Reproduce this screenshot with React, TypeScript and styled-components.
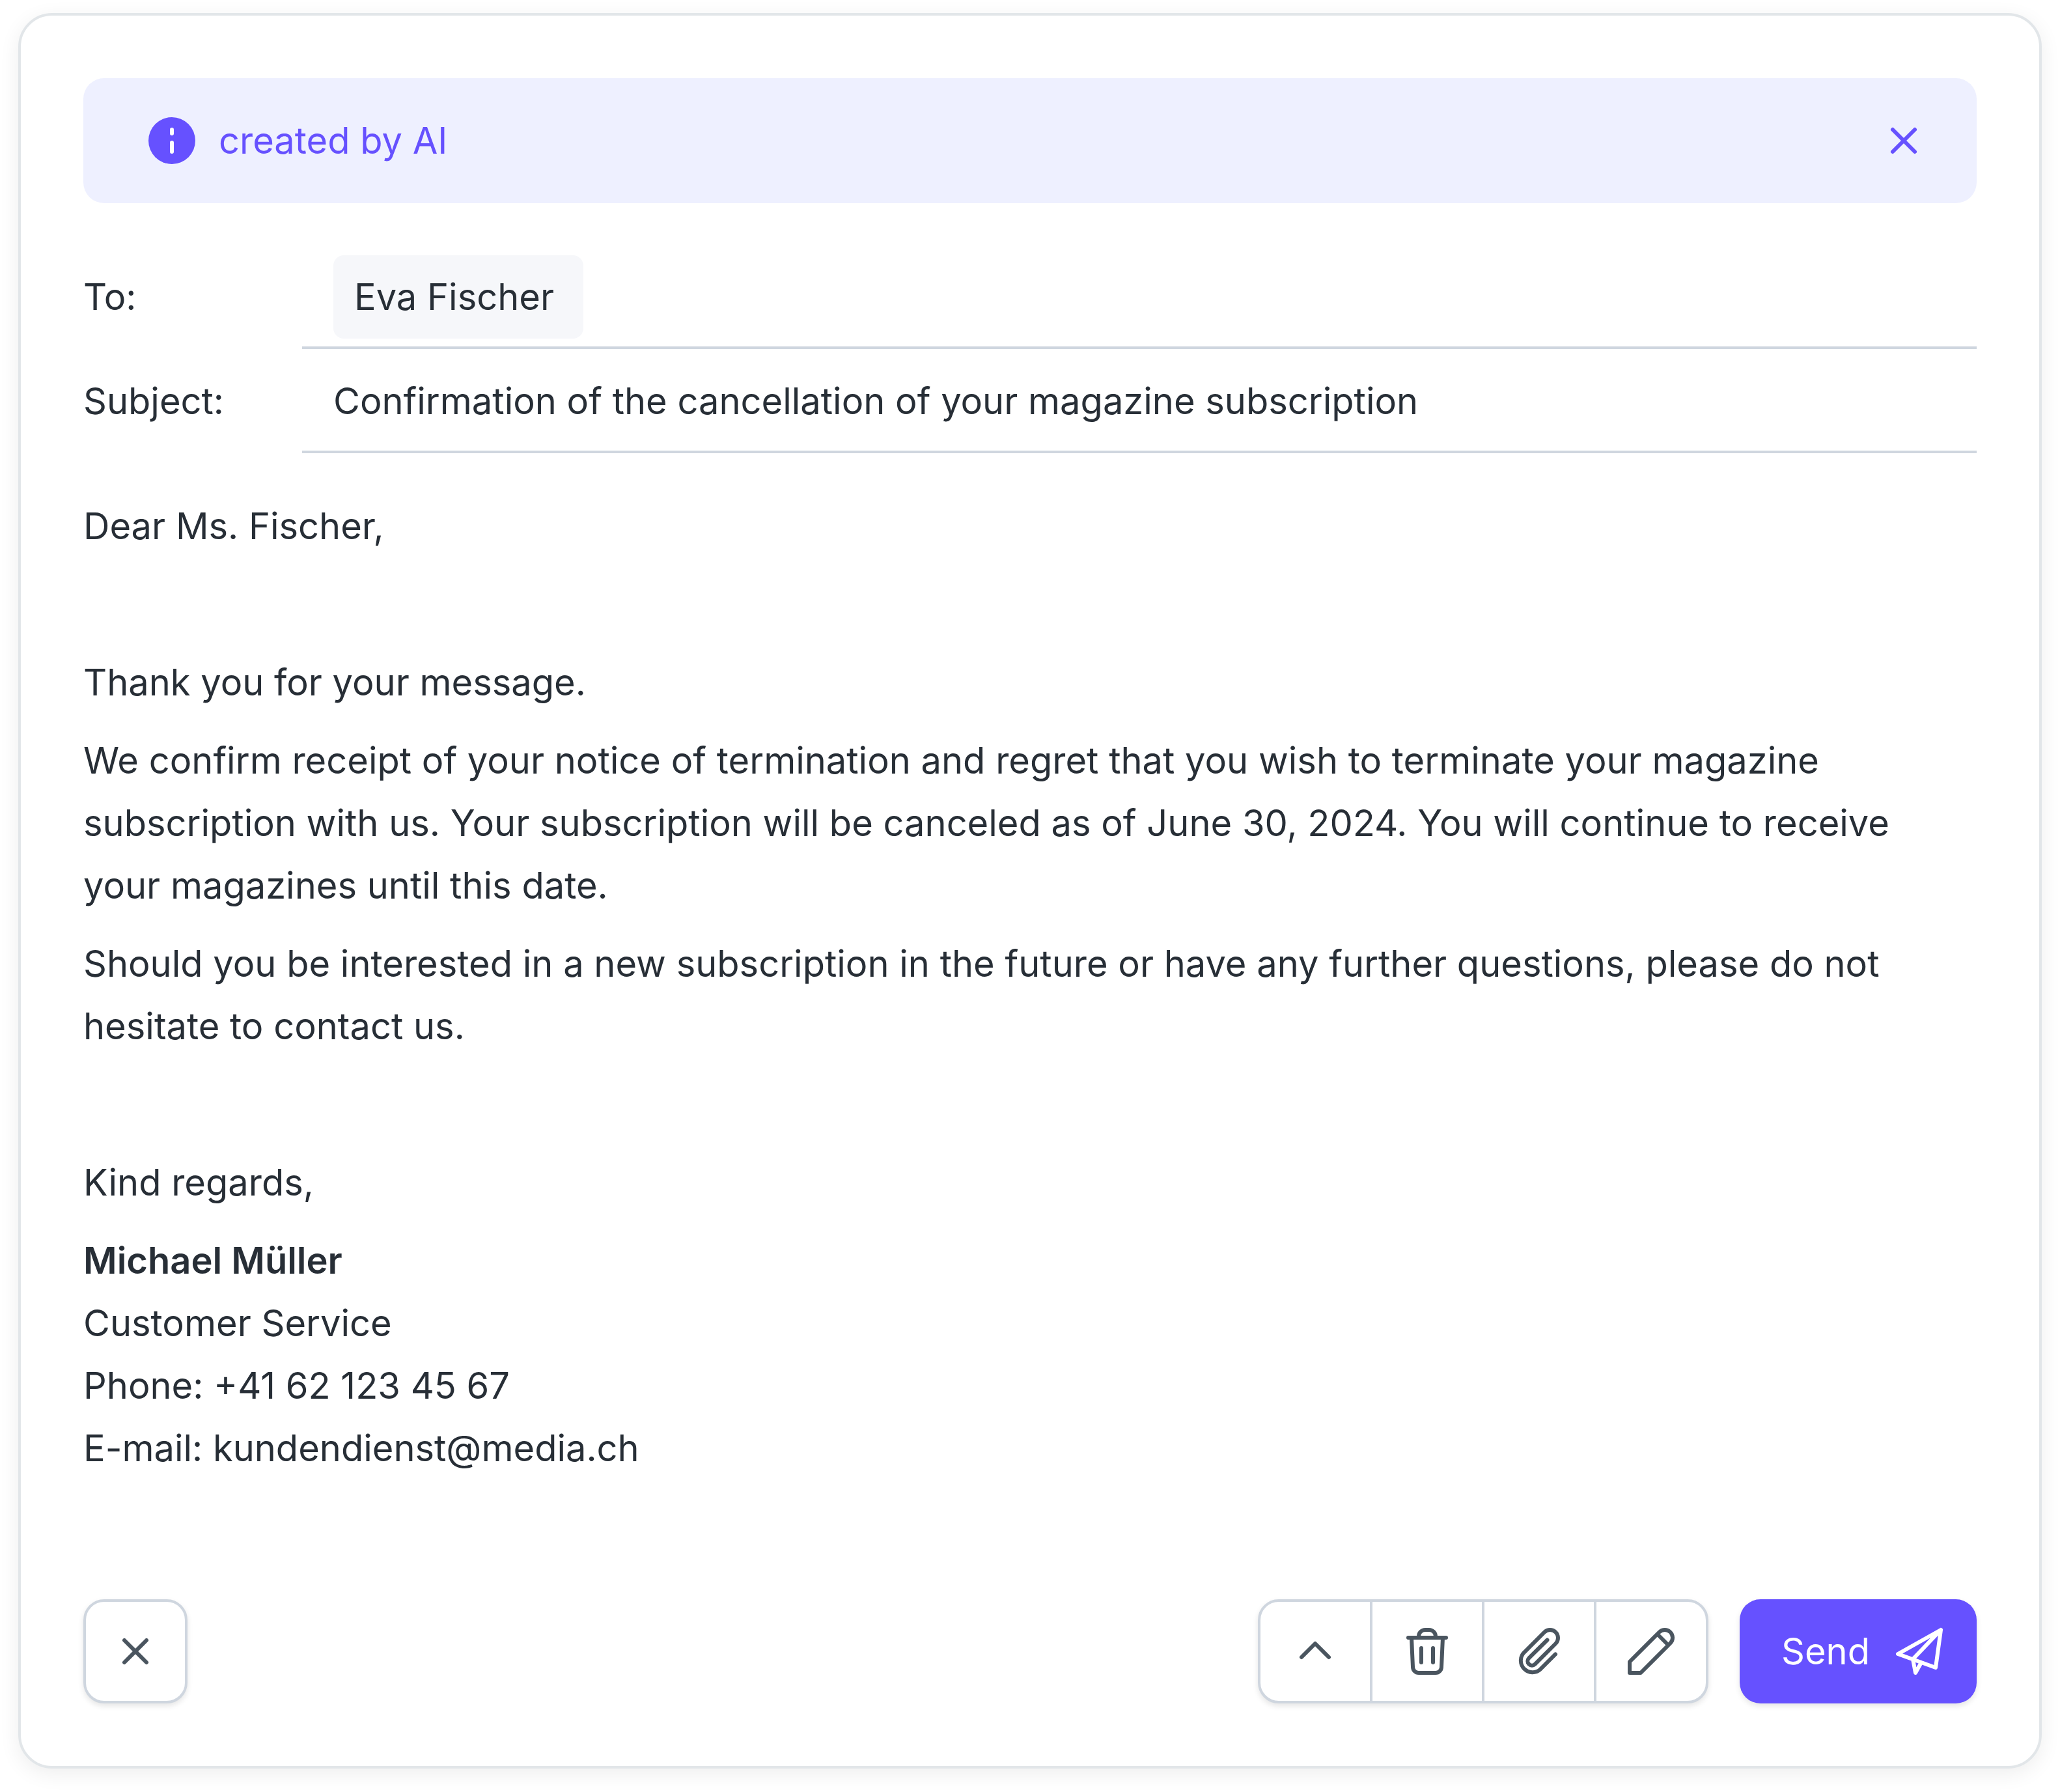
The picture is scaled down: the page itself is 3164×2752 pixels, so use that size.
import React from "react";
import styled, { createGlobalStyle } from "styled-components";

const color = {
  primary: "#6651ff",
  primarySoft: "#eef0ff",
  text: "#272e36",
  icon: "#4a555f",
  line: "#cfd6df",
  cardLine: "#e2e6e9",
  chip: "#f6f7fa",
};

const GlobalStyle = createGlobalStyle`
  *, *::before, *::after { box-sizing: border-box; }
  body {
    margin: 0;
    background: #ffffff;
    color: ${color.text};
    font-family: Inter, "Liberation Sans", sans-serif;
    font-size: 56px;
    font-optical-sizing: none;
    font-variation-settings: "opsz" 14;
    line-height: 96px;
  }
  button, input { font: inherit; font-variation-settings: inherit; color: inherit; }
`;

const Page = styled.main`
  padding: 20px 28px 36px;
`;

const Card = styled.form`
  display: flex;
  flex-direction: column;
  padding: 96px;
  background: #ffffff;
  border: 4px solid ${color.cardLine};
  border-radius: 52px;
  box-shadow: 0 8px 32px rgba(0, 0, 0, 0.07);
`;

const Banner = styled.div`
  display: flex;
  align-items: center;
  gap: 32px;
  padding: 48px 72px 48px 96px;
  background: ${color.primarySoft};
  border-radius: 32px;
  color: ${color.primary};
`;

const BannerText = styled.span`
  flex: 1;
`;

const PlainButton = styled.button`
  display: flex;
  padding: 0;
  border: 0;
  background: none;
  cursor: pointer;
`;

const Fields = styled.div`
  display: flex;
  flex-direction: column;
  margin: 64px 0;
`;

const Field = styled.div`
  display: grid;
  grid-template-columns: 336px 1fr;
  align-items: center;
`;

const FieldBox = styled.div`
  display: flex;
  align-items: center;
  height: 160px;
  padding: 4px 48px 0;
  border-bottom: 4px solid ${color.line};
`;

const Chip = styled.span`
  min-width: 384px;
  padding: 16px 32px;
  border-radius: 16px;
  background: ${color.chip};
`;

const SubjectInput = styled.input`
  width: 100%;
  height: 96px;
  padding: 0;
  border: 0;
  outline: 0;
  background: transparent;
`;

const Message = styled.article`
  display: flex;
  flex-direction: column;
  gap: 24px;
`;

const Paragraph = styled.p`
  margin: 0;
  min-height: 96px;
`;

const Signer = styled.strong`
  font-weight: 600;
`;

const Footer = styled.footer`
  display: flex;
  align-items: center;
  gap: 48px;
  margin-top: 184px;
`;

const shadow = "0 4px 8px rgba(0, 0, 0, 0.1)";

const CloseButton = styled.button`
  display: flex;
  align-items: center;
  justify-content: center;
  width: 160px;
  height: 160px;
  margin-right: auto;
  padding: 0;
  border: 4px solid ${color.line};
  border-radius: 32px;
  background: #ffffff;
  box-shadow: ${shadow};
  color: ${color.icon};
  cursor: pointer;
`;

const ToolGroup = styled.div`
  display: flex;
  height: 160px;
  border: 4px solid ${color.line};
  border-radius: 32px;
  background: #ffffff;
  box-shadow: ${shadow};
`;

const ToolButton = styled.button`
  display: flex;
  align-items: center;
  justify-content: center;
  box-sizing: content-box;
  width: 168px;
  padding: 0;
  border: 0;
  background: none;
  color: ${color.icon};
  cursor: pointer;

  & + & {
    border-left: 4px solid ${color.line};
  }
`;

const SendButton = styled.button`
  display: flex;
  align-items: center;
  justify-content: space-between;
  gap: 32px;
  min-width: 364px;
  height: 160px;
  padding: 0 48px 0 64px;
  border: 0;
  border-radius: 32px;
  background: ${color.primary};
  box-shadow: ${shadow};
  color: #ffffff;
  cursor: pointer;
`;

const Icon = styled.svg.attrs({
  viewBox: "0 0 80 80",
  fill: "none",
  stroke: "currentColor",
  strokeWidth: 6,
  strokeLinecap: "round",
  strokeLinejoin: "round",
  "aria-hidden": true,
})`
  display: block;
  flex: none;
  width: 80px;
  height: 80px;
`;

const CrossIcon = () => (
  <Icon>
    <path d="M23 23L57 57M57 23L23 57" />
  </Icon>
);

const tools = [
  { label: "Expand", path: "M19 49L40 28L61 49" },
  {
    label: "Delete",
    path: "M11 19H69M27 19V17A10 10 0 0 1 37 7H43A10 10 0 0 1 53 17V19M16 19L18 64A9 9 0 0 0 27 73H53A9 9 0 0 0 62 64L64 19M31 35V57M49 35V57",
  },
  {
    label: "Attach file",
    path: "M65 44.4L41.7 67.7A18 18 0 0 1 16.3 42.3L48 10.6A12.3 12.3 0 0 1 65.4 28L33.7 59.7A6.6 6.6 0 0 1 24.3 50.3L52.5 22.5",
  },
  {
    label: "Edit",
    path: "M7 56L52.5 10.5A12 12 0 0 1 69.5 27.5L24 73H7ZM49.5 13.5L66.5 30.5",
  },
];

export default function App() {
  return (
    <>
      <GlobalStyle />
      <Page>
        <Card onSubmit={(event) => event.preventDefault()}>
          <Banner role="status">
            <Icon>
              <circle cx="40" cy="40" r="36" fill="currentColor" stroke="none" />
              <path d="M40 23V29M40 43V57" stroke="#ffffff" />
            </Icon>
            <BannerText>created by AI</BannerText>
            <PlainButton type="button" aria-label="Dismiss">
              <CrossIcon />
            </PlainButton>
          </Banner>

          <Fields>
            <Field>
              <span id="to-label">To:</span>
              <FieldBox role="group" aria-labelledby="to-label">
                <Chip>Eva Fischer</Chip>
              </FieldBox>
            </Field>
            <Field>
              <label htmlFor="subject">Subject:</label>
              <FieldBox>
                <SubjectInput
                  id="subject"
                  type="text"
                  defaultValue="Confirmation of the cancellation of your magazine subscription"
                />
              </FieldBox>
            </Field>
          </Fields>

          <Message>
            <Paragraph>Dear Ms. Fischer,</Paragraph>
            <Paragraph />
            <Paragraph>Thank you for your message.</Paragraph>
            <Paragraph>
              We confirm receipt of your notice of termination and regret that you wish to terminate
              your magazine subscription with us. Your subscription will be canceled as of June 30,
              2024. You will continue to receive your&nbsp;magazines until this date.
            </Paragraph>
            <Paragraph>
              Should you be interested in a new subscription in the future or have any further
              questions, please do not hesitate to contact us.
            </Paragraph>
            <Paragraph />
            <Paragraph>Kind regards,</Paragraph>
            <Paragraph>
              <Signer>Michael Müller</Signer>
              <br />
              Customer Service
              <br />
              Phone: +41 62 123 45 67
              <br />
              E-mail: kundendienst@media.ch
            </Paragraph>
          </Message>

          <Footer>
            <CloseButton type="button" aria-label="Close">
              <CrossIcon />
            </CloseButton>
            <ToolGroup role="group" aria-label="Message tools">
              {tools.map((tool) => (
                <ToolButton key={tool.label} type="button" aria-label={tool.label}>
                  <Icon>
                    <path d={tool.path} />
                  </Icon>
                </ToolButton>
              ))}
            </ToolGroup>
            <SendButton type="submit">
              Send
              <Icon>
                <path d="M73 7L7 44L65 65ZM73 7L30 52L34 73L43 57" />
              </Icon>
            </SendButton>
          </Footer>
        </Card>
      </Page>
    </>
  );
}
